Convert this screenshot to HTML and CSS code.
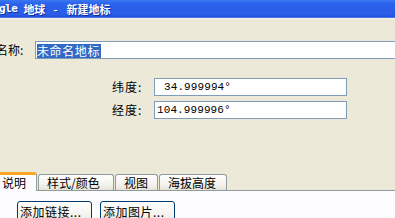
FILE: index.html
```html
<!DOCTYPE html>
<html>
<head>
<meta charset="utf-8">
<link rel="stylesheet" href="styles.css">
</head>
<body>
<div class="window">
  <div class="titlebar">
    <span class="title t1">gle</span>
    <span class="title t2">地球</span>
    <span class="title t3">-</span>
    <span class="title t4">新建地标</span>
  </div>
  <div class="name-row">
    <span class="name-label">名称:</span>
    <div class="name-input"><span class="sel">未命名地标</span></div>
  </div>
  <div class="coords">
    <span class="coord-label">纬度:</span>
    <div class="coord-input"><span class="num pad">34.999994°</span></div>
    <span class="coord-label">经度:</span>
    <div class="coord-input"><span class="num">104.999996°</span></div>
  </div>
  <div class="tabs">
    <div class="tab active">说明</div>
    <div class="tab">样式/颜色</div>
    <div class="tab">视图</div>
    <div class="tab">海拔高度</div>
  </div>
  <div class="panel">
    <button class="btn">添加链接...</button>
    <button class="btn">添加图片...</button>
  </div>
</div>
</body>
</html>
```
FILE: styles.css
```css
html, body {
  margin: 0;
  padding: 0;
}
body {
  width: 395px;
  height: 218px;
  overflow: hidden;
  background: #ECE9D8;
  font-family: "Noto Sans CJK SC", "DejaVu Sans", sans-serif;
  font-size: 12px;
  color: #000;
}
.window {
  width: 395px;
  height: 218px;
  display: flex;
  flex-direction: column;
}
.titlebar {
  height: 18px;
  background: linear-gradient(#3A78F2 0px, #2B61EC 4px, #2A5DE8 14px, #2252DD 17px, #6E98EE 18px);
  border-bottom: 1px solid #F4F2EA;
  display: flex;
  align-items: center;
}
.title {
  color: #fff;
  font-weight: bold;
  font-size: 11px;
  line-height: 18px;
  white-space: pre;
  text-shadow: 1px 1px 0 #0F2F9E;
}
.t1 {
  margin-left: -1px;
  font-family: "DejaVu Sans Mono", monospace;
  letter-spacing: -0.5px;
}
.t2 { margin-left: 6px; }
.t3 { margin-left: 8px; }
.t4 { margin-left: 9px; }
.name-row {
  display: flex;
  align-items: center;
  margin-top: 22px;
  height: 18px;
}
.name-label {
  margin-left: -4px;
  width: 39px;
  flex: none;
  line-height: 18px;
}
.name-input {
  width: 400px;
  flex: none;
  height: 18px;
  box-sizing: border-box;
  border: 1px solid #7F9DB9;
  background: #fff;
  padding: 1px 0 0 1px;
  display: flex;
  align-items: center;
}
.sel {
  background: #316AC5;
  color: #fff;
  line-height: 14px;
  height: 14px;
  padding-right: 1px;
  letter-spacing: 0.6px;
}
.coords {
  margin-top: 19px;
  margin-left: 112px;
  display: grid;
  grid-template-columns: 42px 193px;
  row-gap: 5px;
  align-items: center;
}
.coord-label {
  line-height: 18px;
  letter-spacing: 1px;
}
.coord-input {
  height: 18px;
  box-sizing: border-box;
  border: 1px solid #7F9DB9;
  background: #fff;
  display: flex;
  align-items: center;
  padding-left: 2px;
}
.num {
  font-family: "Liberation Mono", "DejaVu Sans Mono", monospace;
  font-size: 11px;
  letter-spacing: 0.1px;
}
.num.pad {
  padding-left: 7px;
}
.tabs {
  margin-top: 53px;
  display: flex;
  align-items: flex-end;
  height: 19px;
  gap: 1px;
}
.tab {
  flex: none;
  height: 16px;
  box-sizing: border-box;
  border: 1px solid #919B9C;
  border-bottom: none;
  border-radius: 3px 3px 0 0;
  background: linear-gradient(#FEFEFE, #F4F3EE 60%, #E6E3D8);
  line-height: 15px;
  padding: 0 0 0 8px;
  font-size: 12px;
}
.tab.active {
  height: 19px;
  width: 37px;
  padding: 0 0 0 2px;
  border-left: none;
  border-top: 3px solid #F7A723;
  border-radius: 0 3px 0 0;
  background: #FCFCFE;
  line-height: 15px;
  margin-bottom: -1px;
  position: relative;
  z-index: 1;
}
.tab:nth-child(2) { width: 76px; }
.tab:nth-child(3) { width: 43px; }
.tab:nth-child(4) { width: 68px; }
.panel {
  flex: 1;
  background: #FCFCFE;
  border-top: 1px solid #919B9C;
  padding: 10px 0 0 17px;
  display: flex;
  align-items: flex-start;
  gap: 8px;
}
.btn {
  width: 75px;
  height: 22px;
  box-sizing: border-box;
  border: 1px solid #003C74;
  border-radius: 3px;
  background: linear-gradient(#FFFFFF, #F3F2EC 70%, #E3E0D3);
  font-family: "Noto Sans CJK SC", "DejaVu Sans", sans-serif;
  font-size: 12px;
  padding: 0 0 0 2px;
  text-align: left;
  line-height: 16px;
  color: #000;
  letter-spacing: 0.5px;
}
```
